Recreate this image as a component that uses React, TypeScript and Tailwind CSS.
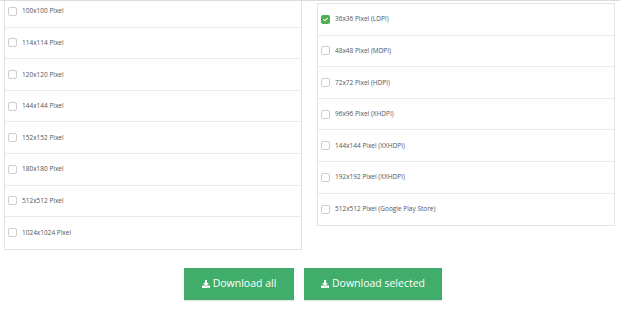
import React from "react";
import { FaDownload, FaCheck } from "react-icons/fa";

const leftSizes = [
  "100x100 Pixel",
  "114x114 Pixel",
  "120x120 Pixel",
  "144x144 Pixel",
  "152x152 Pixel",
  "180x180 Pixel",
  "512x512 Pixel",
  "1024x1024 Pixel",
];

const rightSizes = [
  { label: "36x36 Pixel (LDPI)", checked: true },
  { label: "48x48 Pixel (MDPI)", checked: false },
  { label: "72x72 Pixel (HDPI)", checked: false },
  { label: "96x96 Pixel (XHDPI)", checked: false },
  { label: "144x144 Pixel (XXHDPI)", checked: false },
  { label: "192x192 Pixel (XXHDPI)", checked: false },
  { label: "512x512 Pixel (Google Play Store)", checked: false },
];

const SizeRow = ({ label, checked }: { label: string; checked?: boolean }) => (
  <label className="flex items-center h-[31.6px] pl-[3px] border-b border-[#ebebeb] last:border-b-0">
    {checked ? (
      <span className="w-[9px] h-[9px] rounded-[2px] bg-[#4caf50] flex items-center justify-center">
        <FaCheck className="w-[5px] h-[5px] text-white" />
      </span>
    ) : (
      <span className="w-[9px] h-[9px] rounded-[2px] border border-[#cfcfcf] bg-white" />
    )}
    <span className="ml-[5px] text-[6.5px] text-[#555]">{label}</span>
  </label>
);

export default function App() {
  return (
    <div className="w-[620px] h-[309px] bg-white border-t border-[#dcdcdc] overflow-hidden font-['Open_Sans',sans-serif]">
      <div className="flex items-start gap-[15px] pl-[4px]">
        <div className="w-[298px] -mt-[6px] border border-[#e3e3e3] bg-white">
          {leftSizes.map((s) => (
            <SizeRow key={s} label={s} />
          ))}
        </div>
        <div className="w-[298px] mt-[2px] border border-[#e3e3e3] bg-white">
          {rightSizes.map((s) => (
            <SizeRow key={s.label} label={s.label} checked={s.checked} />
          ))}
        </div>
      </div>
      <div className="flex justify-center gap-[10px] mt-[18px] pl-[6px]">
        <button className="w-[110px] h-[32px] bg-[#41ad6b] text-white text-[10.5px] flex items-center justify-center gap-[3px] shadow-[0_1px_1px_rgba(0,0,0,0.1)]">
          <FaDownload className="w-[8px] h-[8px]" />
          Download all
        </button>
        <button className="w-[138px] h-[32px] bg-[#41ad6b] text-white text-[10.5px] flex items-center justify-center gap-[3px] shadow-[0_1px_1px_rgba(0,0,0,0.1)]">
          <FaDownload className="w-[8px] h-[8px]" />
          Download selected
        </button>
      </div>
    </div>
  );
}
